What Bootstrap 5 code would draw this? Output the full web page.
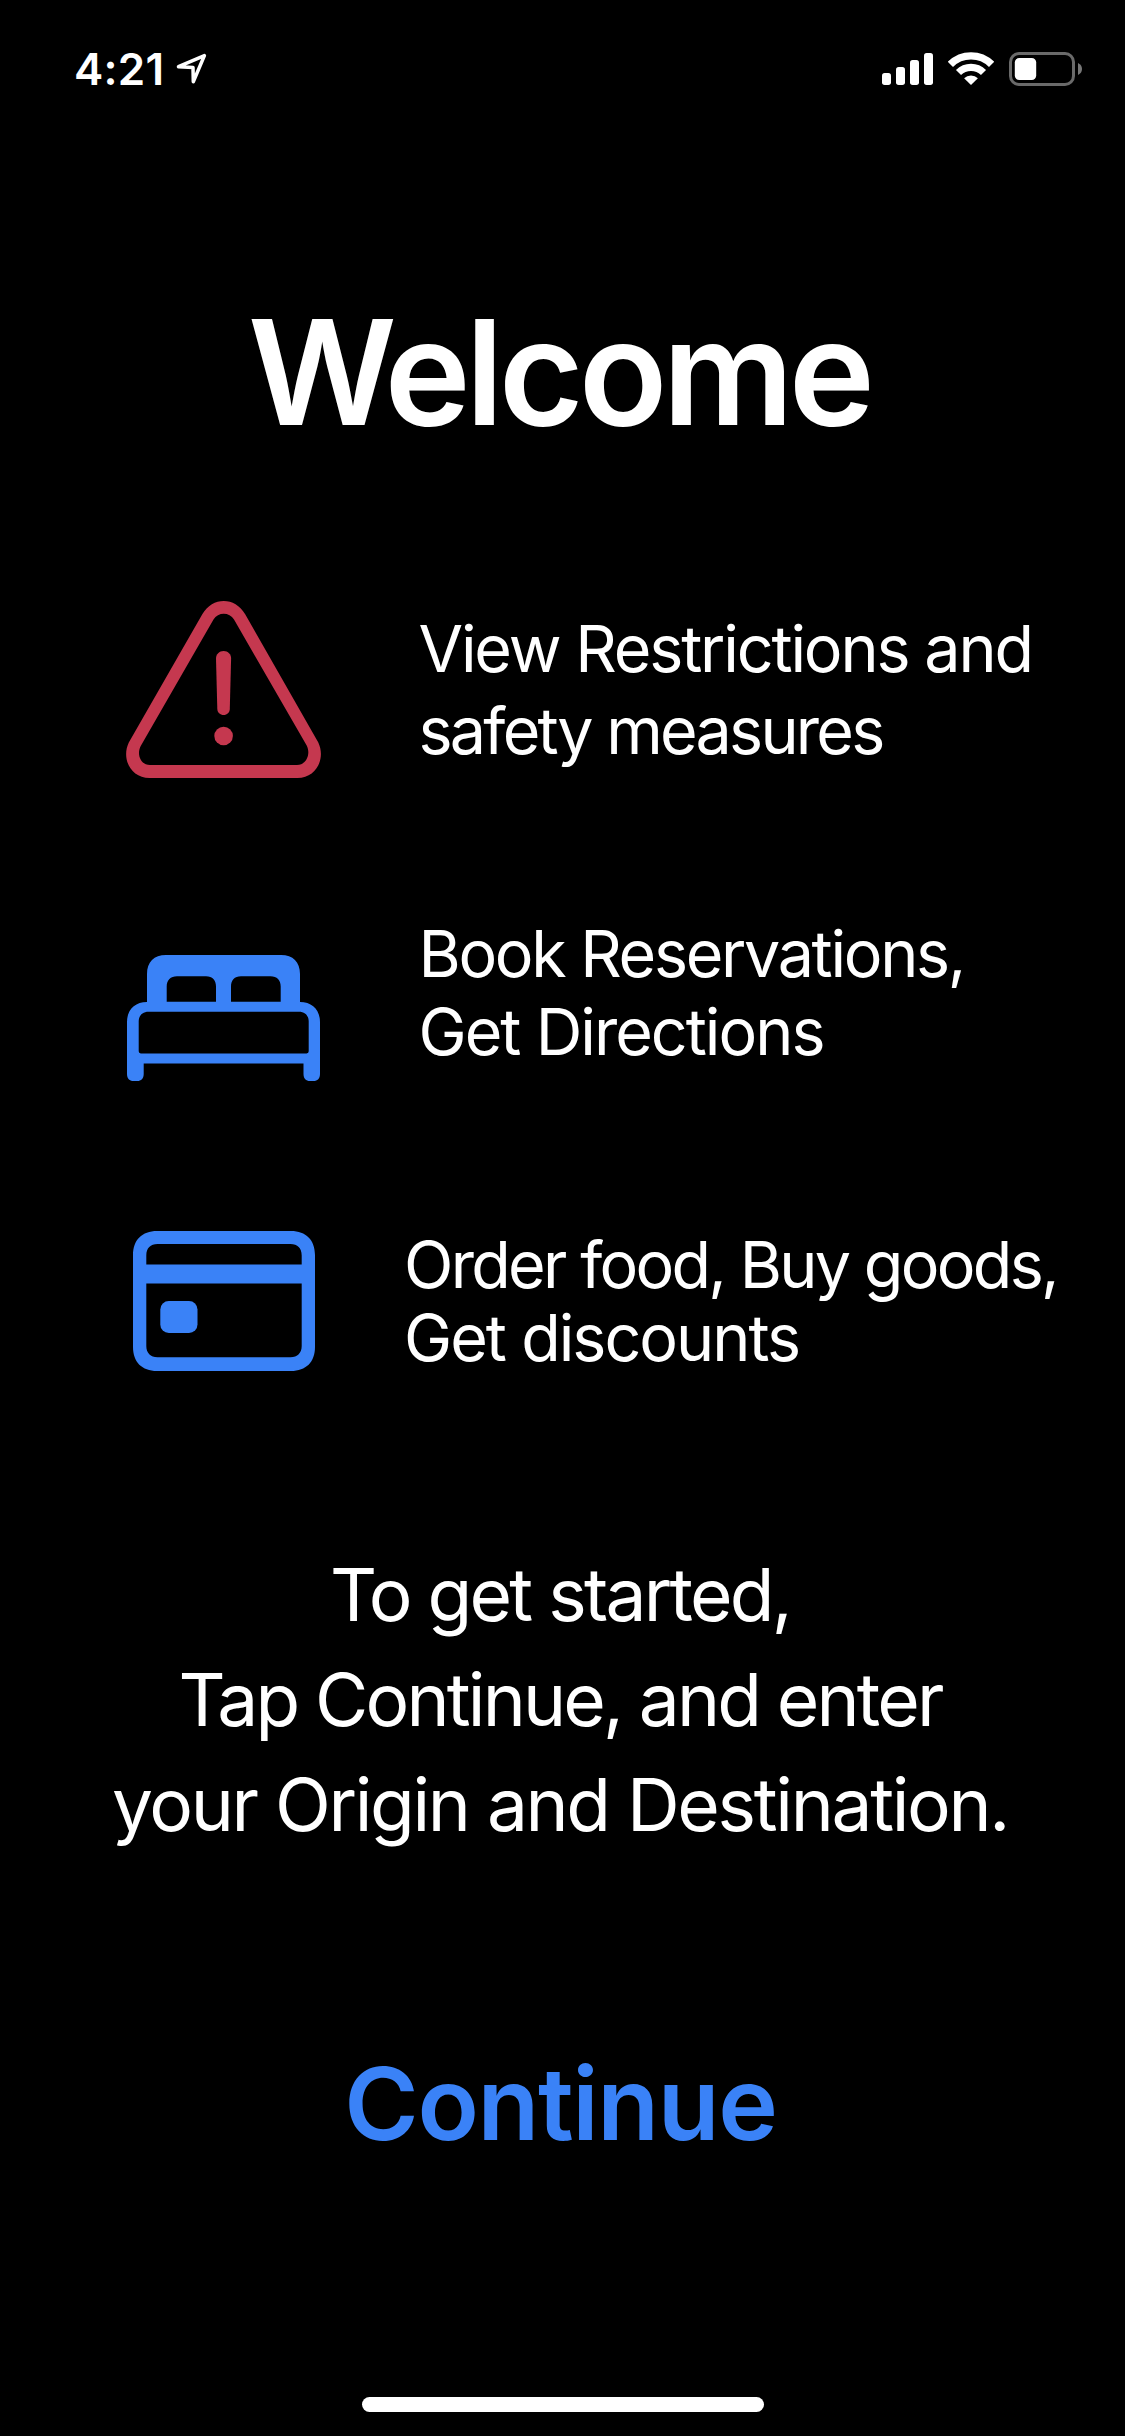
<!DOCTYPE html>
<html lang="en" data-bs-theme="dark">
<head>
<meta charset="utf-8">
<meta name="viewport" content="width=device-width, initial-scale=1">
<title>Welcome</title>
<link href="https://cdn.jsdelivr.net/npm/bootstrap@5.3.0/dist/css/bootstrap.min.css" rel="stylesheet">
<style>
  body { background: #000; color: #fff; font-family: Inter, "Liberation Sans", sans-serif; font-kerning: normal; }
  svg { display: block; flex: none; }
  .screen { width: 1125px; height: 2436px; }
  .status-bar { height: 138px; padding: 0 43px 0 74px; }
  .clock { font-size: 44px; line-height: 138px; font-weight: 600; letter-spacing: .25px; margin-right: 12px; }
  .status-icons { gap: 15px; }
  .welcome-title { font-size: 145.8px; line-height: 160px; font-weight: 600; letter-spacing: -5px; margin: 154px 7px 149px 0; }
  .feature { font-size: 64.6px; white-space: nowrap; }
  .feature-icon { width: 292.5px; }
  .feature-1 { padding-left: 126px; height: 177px; line-height: 82px; }
  .feature-2 { padding-left: 127px; margin-top: 137px; height: 166px; line-height: 78px; }
  .feature-2 .feature-icon { width: 291.5px; }
  .feature-3 { padding-left: 133px; margin-top: 147px; height: 146px; line-height: 73px; }
  .feature-3 .feature-icon { width: 271px; padding-top: 3px; }
  .intro { font-size: 73px; line-height: 105px; margin: 168px 5px 0 0; white-space: nowrap; }
  .btn-continue { --bs-btn-color: #3a82f7; font-size: 101px; line-height: 120px; font-weight: 600; letter-spacing: -1.35px; padding: 0; border: 0; margin: 186px 4px 0 0; color: #3a82f7; }
  .home-indicator { width: 402px; height: 15px; margin-bottom: 24px; }
  .t20 { letter-spacing: -2px; }
  .t22 { letter-spacing: -2.18px; }
  .t23 { letter-spacing: -2.32px; }
  .t27 { letter-spacing: -2.7px; }
  .t28 { letter-spacing: -2.75px; }
  .t29 { letter-spacing: -2.84px; }
</style>
</head>
<body>
<div class="screen d-flex flex-column overflow-hidden">
  <header class="status-bar d-flex align-items-center justify-content-between">
    <div class="d-flex align-items-center">
      <span class="clock">4:21</span>
      <svg width="32" height="32" viewBox="0 0 32 32" fill="none" stroke="#fff" stroke-width="3.5" stroke-linejoin="round"><path d="M28.4 2.6 2.500 13.700 17 14.500 17.300 28.700Z"/></svg>
    </div>
    <div class="status-icons d-flex align-items-center">
      <svg width="51" height="32" viewBox="0 0 51 32" fill="#fff"><rect y="20" width="9" height="12" rx="2.7"/><rect x="14" y="14" width="9" height="18" rx="2.7"/><rect x="28" y="7" width="9" height="25" rx="2.7"/><rect x="42" width="9" height="32" rx="2.7"/></svg>
      <svg width="46" height="34" viewBox="0 0 46 34"><g fill="none" stroke="#fff"><path stroke-width="7.4" d="M2.4 12.4A29.2 29.2 0 0 1 43.6 12.4"/><path stroke-width="7.2" d="M10.5 20.5A17.7 17.7 0 0 1 35.5 20.5"/></g><path fill="#fff" d="M23 33 16.1 26.3A9.8 9.8 0 0 1 29.9 26.3Z"/></svg>
      <svg width="73" height="34" viewBox="0 0 73 34"><rect x="1.5" y="1.5" width="63" height="31" rx="8.5" fill="none" stroke="#6a6a6a" stroke-width="3"/><rect x="5.8" y="6" width="21.4" height="22" rx="4.5" fill="#fff"/><path fill="#777" d="M69 11C71.800 12.400 73 14.500 73 17S71.800 21.600 69 23Z"/></svg>
    </div>
  </header>
  <main class="d-flex flex-column flex-grow-1">
    <h1 class="welcome-title text-center">Welcome</h1>

    <section class="feature feature-1 d-flex align-items-center">
      <div class="feature-icon">
        <svg width="195" height="177" viewBox="0 0 195 177" fill="#c5384f"><path fill-rule="evenodd" d="M76.300 13.300C86.500-4.400 109-4.400 119.200 13.300L192.300 141.500C200 158 190 177 171.500 177H23.500C5 177-5 158 2.800 141.500ZM87.500 18.500C92 10.800 103.500 10.800 108 18.500L180.700 144.500C185 153 180.500 164 171 164H24C14.500 164 10.200 153 15 144.500Z"/><path d="M90 57.500C90 53.400 93.200 50 97.600 50S105.200 53.400 105.100 57.500L103.800 108C103.700 111.600 101 114 97.600 114S91.400 111.600 91.300 108Z"/><circle cx="97.600" cy="135" r="9.300"/></svg>
      </div>
      <div><div class="t22">View Restrictions and</div><div class="t28">safety measures</div></div>
    </section>

    <section class="feature feature-2 d-flex">
      <div class="feature-icon align-self-end">
        <svg width="193" height="126" viewBox="0 0 193 126" fill="#3a82f7"><path fill-rule="evenodd" d="M20 47V19C20 7 27 0 39 0H154C166 0 173 7 173 19V47C185 47 193 54.500 193 67V119C193 123.500 190.500 126 186.500 126H183C179 126 176.500 123.500 176.500 119V108.500H16.700V119C16.700 123.500 14.200 126 10.200 126H6.500C2.500 126 0 123.500 0 119V67C0 54.500 8 47 20 47ZM39.700 46.700H89V31.500C89 25 85.500 21.200 79 21.200H50C43.500 21.200 39.700 25 39.700 31.500ZM104 46.700H153.700V31.500C153.700 25 150 21.200 143.500 21.200H114C107.500 21.200 104 25 104 31.500ZM11.700 66.500V96.300Q11.700 98.400 13.800 98.400H179.600Q181.700 98.400 181.700 96.300V66.500C181.700 60.500 178 56.700 172 56.700H21.500C15.500 56.700 11.700 60.500 11.700 66.500Z"/></svg>
      </div>
      <div><div class="t23">Book Reservations,</div><div class="t20">Get Directions</div></div>
    </section>

    <section class="feature feature-3 d-flex">
      <div class="feature-icon">
        <svg width="182" height="140" viewBox="0 0 182 140" fill="#3a82f7"><path fill-rule="evenodd" d="M24 0H158C173 0 182 9 182 24V116C182 131 173 140 158 140H24C9 140 0 131 0 116V24C0 9 9 0 24 0ZM13.300 33.400H168.700V24.500C168.700 17 164.500 13 157.500 13H24.500C17.500 13 13.300 17 13.300 24.500ZM13.300 52.400V115C13.300 122 17.500 126.200 24.500 126.200H157.500C164.500 126.200 168.700 122 168.700 115V52.400Z"/><rect x="27.300" y="70" width="37.200" height="32" rx="8.500"/></svg>
      </div>
      <div><div class="t27">Order food, Buy goods,</div><div class="t20">Get discounts</div></div>
    </section>

    <div class="intro text-center">
      <div class="t28">To get started,</div>
      <div class="t29">Tap Continue, and enter</div>
      <div class="t23">your Origin and Destination.</div>
    </div>

    <button type="button" class="btn btn-link btn-continue text-decoration-none">Continue</button>
    <div class="home-indicator bg-white rounded-pill mx-auto mt-auto"></div>
  </main>
</div>
<script src="https://cdn.jsdelivr.net/npm/bootstrap@5.3.0/dist/js/bootstrap.bundle.min.js"></script>
</body>
</html>
